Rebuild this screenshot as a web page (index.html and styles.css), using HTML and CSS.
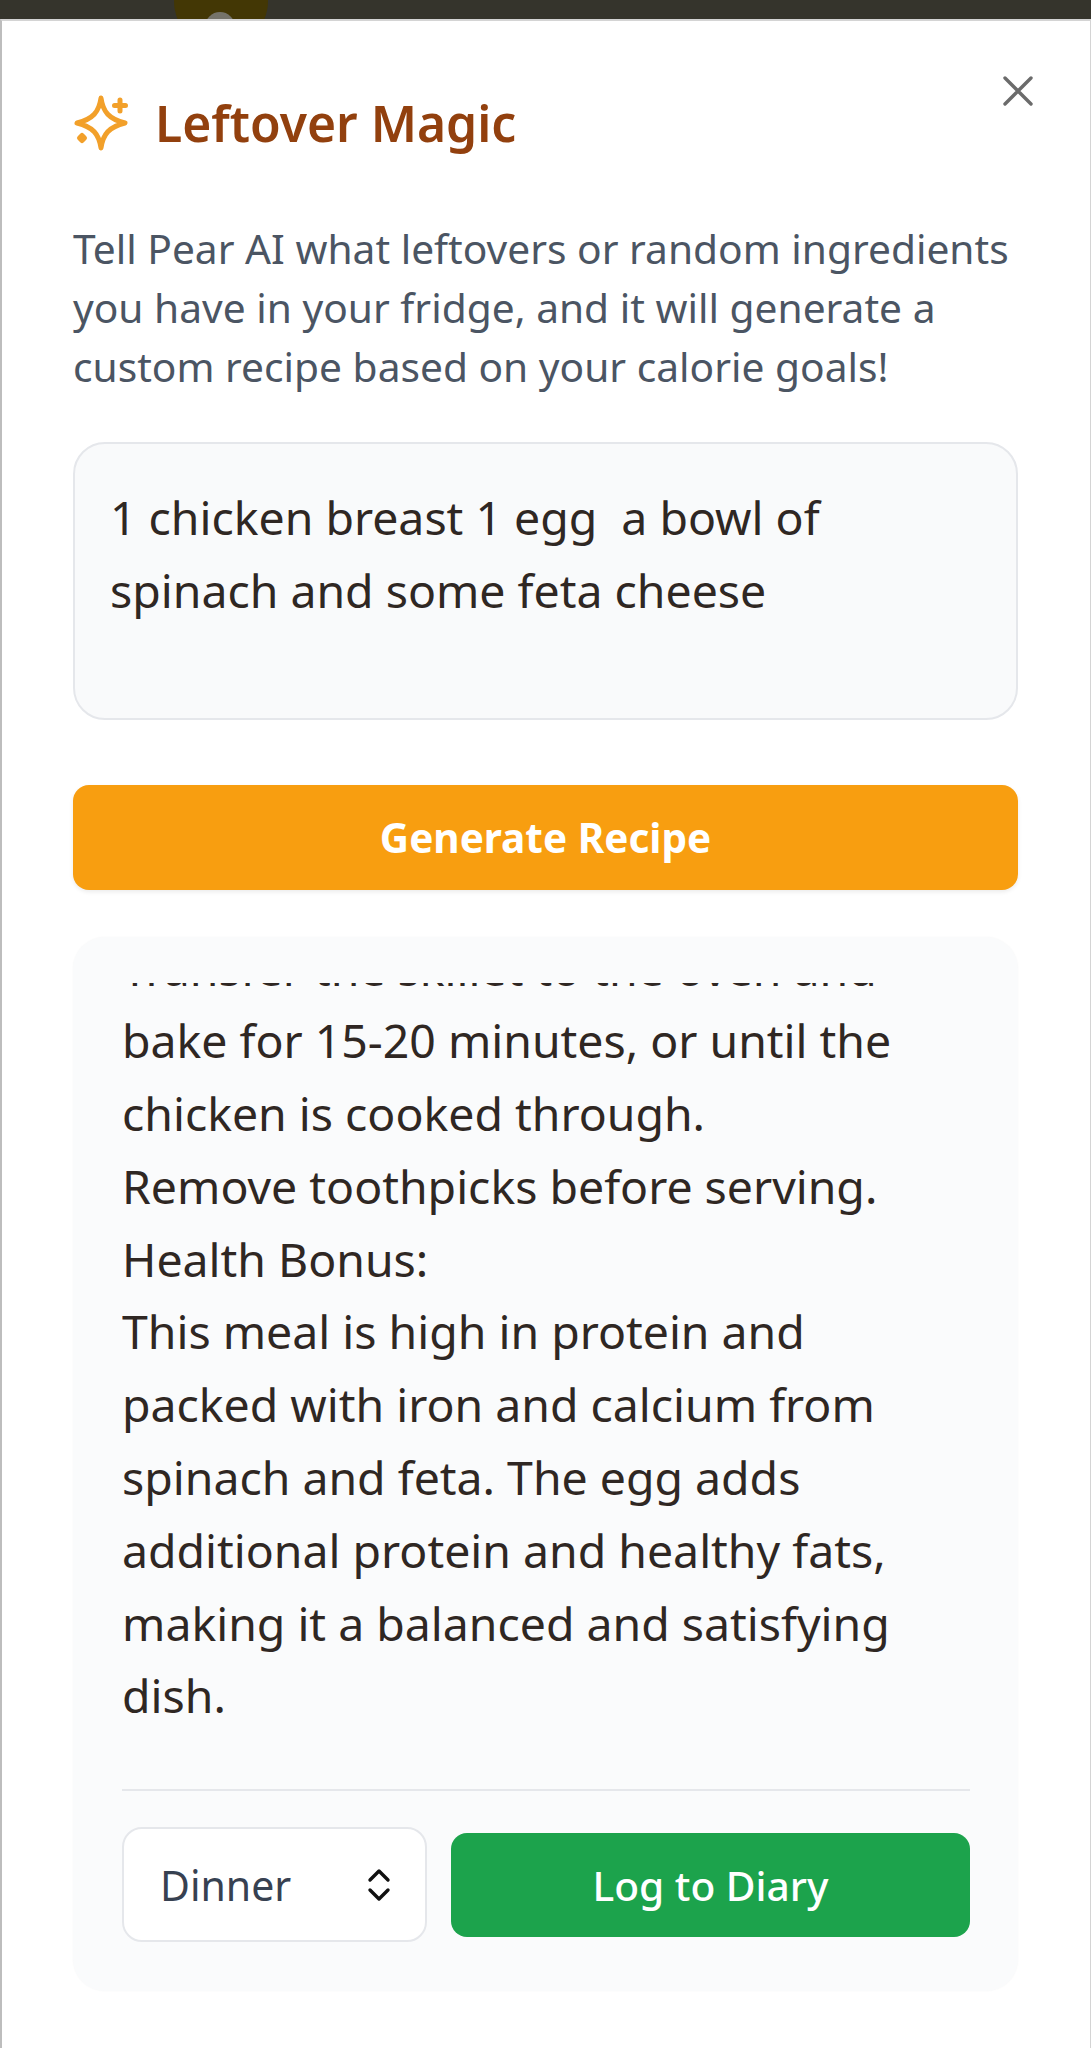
FILE: index.html
```html
<!DOCTYPE html>
<html lang="en">
<head>
    <meta charset="UTF-8">
    <title>Leftover Magic</title>
    <link rel="stylesheet" href="styles.css">
</head>
<body>
<div class="topbar"><span class="avatar"></span></div>
<div class="modal">
    <button class="close" aria-label="Close">
        <svg width="34" height="34" viewBox="0 0 34 34" fill="none" stroke="#6b6b6b" stroke-width="3.4" stroke-linecap="round"><path d="M4 4 30 30M30 4 4 30"/></svg>
    </button>
    <div class="title-row">
        <svg class="sparkle" width="60" height="56" viewBox="0 0 60 56" fill="none" stroke="#f2a02a" stroke-width="5" stroke-linejoin="round" stroke-linecap="round">
            <path d="M28 3C30 17 36 24 52 28 36 32 30 39 28 53 26 39 20 32 4 28 20 24 26 17 28 3Z"/>
            <path d="M47 5V16M41.500 10.500H52.500"/>
            <path d="M9 40.500 11.500 43 9 45.500 6.500 43Z"/>
        </svg>
        <h1>Leftover Magic</h1>
    </div>
    <p class="intro">Tell Pear AI what leftovers or random ingredients you have in your fridge, and it will generate a custom recipe based on your calorie goals!</p>
    <textarea class="ingredients">1 chicken breast 1 egg  a bowl of spinach and some feta cheese</textarea>
    <button class="generate">Generate Recipe</button>
    <div class="result">
        <div class="scroll">
            <div class="recipe">
                <div>Transfer the skillet to the oven and bake for 15-20 minutes, or until the chicken is cooked through.</div>
                <div>Remove toothpicks before serving.</div>
                <div>Health Bonus:</div>
                <div>This meal is high in protein and packed with iron and calcium from spinach and feta. The egg adds additional protein and healthy fats, making it a balanced and satisfying dish.</div>
            </div>
        </div>
        <div class="actions">
            <div class="meal-select">
                <span>Dinner</span>
                <svg width="26" height="34" viewBox="0 0 26 34" fill="none" stroke="#111" stroke-width="3.4" stroke-linecap="round" stroke-linejoin="round"><path d="M4 12 13 3 22 12M4 22 13 31 22 22"/></svg>
            </div>
            <button class="log">Log to Diary</button>
        </div>
    </div>
</div>
</body>
</html>
```

FILE: styles.css
```css
html {
    font-family: "Noto Sans", Arial, sans-serif;
}
body {
    margin: 0;
    height: 2048px;
    overflow: hidden;
    background: #fff;
}
button {
    font-family: inherit;
    border: none;
    cursor: pointer;
}
.topbar {
    height: 19px;
    background: #35342c;
    overflow: hidden;
    padding-left: 174px;
}
.avatar {
    display: block;
    position: relative;
    width: 94px;
    height: 94px;
    margin-top: -46px;
    border-radius: 50%;
    background: #433705;
}
.avatar::after {
    content: "";
    position: absolute;
    top: 58px;
    left: 31px;
    width: 30px;
    height: 30px;
    border-radius: 50%;
    background: #75736a;
}
.modal {
    position: relative;
    height: 2029px;
    box-sizing: border-box;
    padding: 70px 73px 0 73px;
    background: #fff;
    border-top: 2px solid #d4d4d4;
    border-left: 2px solid #bdbdbd;
    border-right: 1px solid #d4d4d4;
}
.close {
    position: absolute;
    top: 53px;
    right: 55px;
    padding: 0;
    background: none;
    display: flex;
}
.title-row {
    display: flex;
    align-items: center;
    gap: 22px;
    margin-left: -2px;
}
.sparkle {
    flex-shrink: 0;
}
.title-row h1 {
    margin: 0;
    font-size: 49.800px;
    line-height: 64px;
    font-weight: 600;
    color: #92400e;
}
.intro {
    margin: 64px 0 0 -2px;
    font-size: 40.700px;
    line-height: 59px;
    color: #4b5563;
}
.ingredients {
    display: block;
    width: 945px;
    height: 278px;
    box-sizing: border-box;
    margin: 46px 0 0 -2px;
    padding: 37px 35px;
    font-family: inherit;
    font-size: 46.400px;
    line-height: 73px;
    color: #2f2723;
    background: #f9fafb;
    border: 2px solid #e5e7eb;
    border-radius: 32px;
    resize: none;
    outline: none;
}
.generate {
    display: block;
    width: 945px;
    height: 105px;
    margin: 65px 0 0 -2px;
    font-size: 40.500px;
    font-weight: 700;
    color: #fff;
    background: #f89e10;
    border-radius: 16px;
    box-shadow: 0 2px 4px rgba(0, 0, 0, .08);
}
.result {
    width: 945px;
    height: 1054px;
    box-sizing: border-box;
    margin: 47px 0 0 -2px;
    padding: 46px 48px 0 49px;
    background: #fafbfc;
    border-radius: 32px;
    box-shadow: 0 0 2px rgba(0, 0, 0, .04);
}
.scroll {
    height: 806px;
    overflow: hidden;
    border-bottom: 2px solid #e5e7eb;
}
.recipe {
    margin-top: -51.500px;
    font-size: 46.400px;
    line-height: 72.800px;
    color: #2f2723;
}
.actions {
    display: flex;
    align-items: center;
    gap: 24px;
    margin-top: 36px;
}
.meal-select {
    display: flex;
    align-items: center;
    justify-content: space-between;
    width: 305px;
    height: 115px;
    box-sizing: border-box;
    padding: 0 33px 0 36px;
    font-size: 41px;
    color: #374151;
    background: #fff;
    border: 2px solid #e5e7eb;
    border-radius: 20px;
}
.log {
    flex: 1;
    height: 104px;
    font-size: 40.700px;
    font-weight: 500;
    color: #fff;
    background: #1ca34c;
    border-radius: 16px;
}
```
